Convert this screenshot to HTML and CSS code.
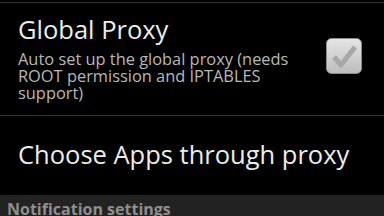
FILE: index.html
```html
<!DOCTYPE html>
<html lang="en">
<head>
    <meta charset="UTF-8">
    <title>Proxy Settings</title>
    <link rel="stylesheet" href="styles.css">
</head>
<body>
    <div class="prefs">
        <div class="divider"></div>

        <!-- Global proxy toggle -->
        <div class="pref pref-check">
            <div class="pref-text">
                <div class="pref-title">Global Proxy</div>
                <div class="pref-summary">Auto set up the global proxy (needs ROOT permission and IPTABLES support)</div>
            </div>
            <div class="checkbox">
                <svg viewBox="0 0 36 36" width="36" height="36">
                    <defs>
                        <linearGradient id="boxg" x1="0" y1="0" x2="0" y2="1">
                            <stop offset="0" stop-color="#e6e6e6"/>
                            <stop offset="1" stop-color="#bcbcbc"/>
                        </linearGradient>
                    </defs>
                    <rect x="0.5" y="0.5" width="35" height="35" rx="5" fill="url(#boxg)" stroke="#8c8c8c"/>
                    <path d="M8 19 L15 27 L29 9" fill="none" stroke="#a8a8a8" stroke-width="5" stroke-linejoin="round"/>
                </svg>
            </div>
        </div>

        <div class="divider"></div>

        <!-- Choose apps -->
        <div class="pref pref-single">
            <div class="pref-title">Choose Apps through proxy</div>
        </div>

        <div class="category">Notification settings</div>
    </div>
</body>
</html>
```

FILE: styles.css
```css
* {
    margin: 0;
    padding: 0;
    box-sizing: border-box;
}

body {
    background-color: #000;
    color: #e6e6e6;
    font-family: "Open Sans", "Noto Sans", sans-serif;
    width: 384px;
    height: 216px;
    overflow: hidden;
}

.prefs {
    padding-top: 2px;
}

.divider {
    height: 1px;
    background-color: #333;
}

.pref {
    display: flex;
    padding-left: 18px;
    padding-right: 22px;
}

.pref-check {
    height: 112px;
    padding-top: 11px;
}

.pref-text {
    flex: 1;
}

.pref-title {
    font-size: 25.5px;
    line-height: 30px;
    color: #ececec;
}

.pref-summary {
    font-size: 16.4px;
    line-height: 17px;
    color: #b8b8b8;
    width: 300px;
    margin-top: 6px;
}

.checkbox {
    width: 36px;
    height: 36px;
    margin-top: 24px;
}

.pref-single {
    height: 79px;
    align-items: center;
    padding-bottom: 3px;
}

.category {
    background-color: #222;
    color: #8e8e8e;
    font-weight: bold;
    font-size: 16px;
    line-height: 20px;
    padding-left: 7px;
    padding-top: 4px;
    height: 24px;
}
```
